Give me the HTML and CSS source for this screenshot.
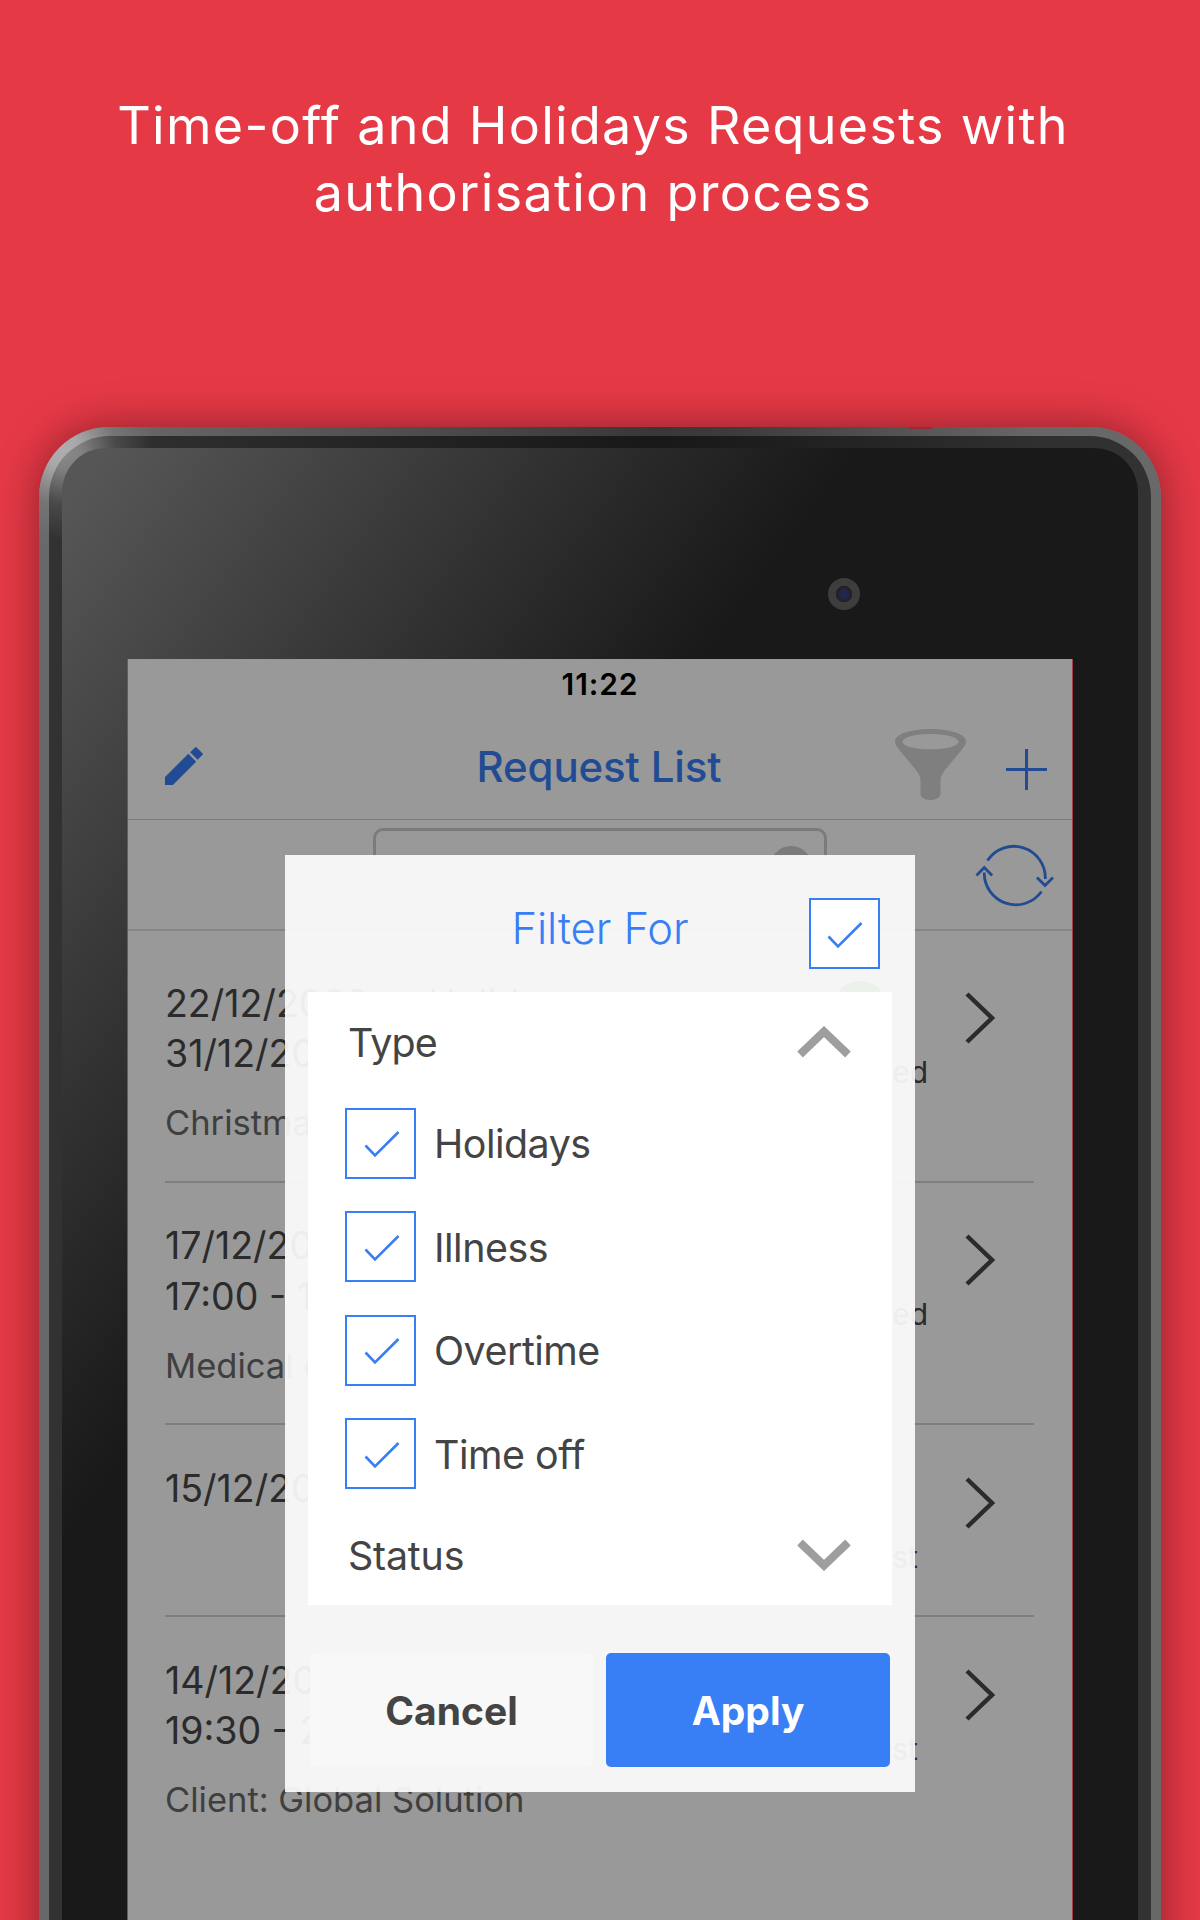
FILE: index.html
```html
<!DOCTYPE html>
<html lang="en">
<head>
<meta charset="utf-8">
<title>Request List</title>
<link rel="stylesheet" href="styles.css">
</head>
<body>
<main class="stage">
  <h1 class="headline">Time-off and Holidays Requests with<br>authorisation process</h1>
  <div class="tablet">
    <span class="sensor"></span>
    <div class="bezel">
      <div class="face">
        <span class="camera"></span>
        <div class="screen">
          <div class="status-bar">11:22</div>
          <header class="toolbar">
            <svg class="icon-edit" viewBox="64 64 384 384"><path d="M64 368v80h80l235.7-235.7-80-80L64 368zM444 143.500a10 10 0 0 0 0-15l-60-60a10 10 0 0 0-15 0l-51 49 76 76z"/></svg>
            <h2 class="title">Request List</h2>
            <div class="actions">
              <svg class="icon-funnel" viewBox="0 0 71 71"><path fill-rule="evenodd" d="M35.500 0C55 0 71 5 71 12.500c0 3-2 5.500-4 8L50 41c-3 4-4.500 7-4.500 10v14c0 3.500-4.500 6-10 6s-10-2.500-10-6V51c0-3-1.500-6-4.500-10L4 20.500c-2-2.500-4-5-4-8C0 5 16 0 35.500 0zM35.500 5C20 5 7.500 8.400 7.500 12.700S20 20.300 35.500 20.300 63.500 17 63.500 12.700 51 5 35.500 5z"/></svg>
              <svg class="icon-plus" viewBox="0 0 41 41"><path d="M20.500 0v41M0 20.500h41"/></svg>
            </div>
          </header>
          <div class="search-row">
            <div class="search"><span class="clear"></span></div>
            <svg class="icon-refresh" viewBox="0 0 80 80"><path d="M13.500 23.500A31.500 31.500 0 0 1 71.300 42M10.300 35.500A31.500 31.500 0 0 0 67.500 54.500M63 40.500l8 8 8-8M2.500 38.500l7.800-8 7.800 8"/></svg>
          </div>
          <div class="requests">
            <article class="request">
              <div class="dates">22/12/2020<br>31/12/2020</div>
              <div class="kind">Holidays</div>
              <div class="state"><span class="dot"></span>Accepted</div>
              <svg class="go" viewBox="0 0 30 52"><path d="M2 2l25 24L2 50"/></svg>
              <p class="note">Christmas</p>
            </article>
            <article class="request">
              <div class="dates">17/12/2020<br>17:00 - 18:00</div>
              <div class="state"><span class="dot"></span>Accepted</div>
              <svg class="go" viewBox="0 0 30 52"><path d="M2 2l25 24L2 50"/></svg>
              <p class="note">Medical c</p>
            </article>
            <article class="request">
              <div class="dates">15/12/2020</div>
              <div class="state"><span class="dot"></span>Request</div>
              <svg class="go" viewBox="0 0 30 52"><path d="M2 2l25 24L2 50"/></svg>
            </article>
            <article class="request">
              <div class="dates">14/12/2020<br>19:30 - 20:30</div>
              <div class="state"><span class="dot"></span>Request</div>
              <svg class="go" viewBox="0 0 30 52"><path d="M2 2l25 24L2 50"/></svg>
              <p class="note">Client: Global Solution</p>
            </article>
          </div>
          <div class="backdrop"></div>
          <section class="modal">
            <div class="modal-head">
              <h3 class="modal-title">Filter For</h3>
              <span class="check check-all"><svg viewBox="0 0 36 28"><path d="M1.500 15.500l9.500 10L34.500 2"/></svg></span>
            </div>
            <div class="panel">
              <div class="group"><span class="type-label">Type</span><svg viewBox="0 0 54 32"><path d="M3 28.500L27 5.500l24 23"/></svg></div>
              <div class="options">
                <div class="option"><span class="check"><svg viewBox="0 0 36 28"><path d="M1.500 15.500l9.500 10L34.500 2"/></svg></span><span>Holidays</span></div>
                <div class="option"><span class="check"><svg viewBox="0 0 36 28"><path d="M1.500 15.500l9.500 10L34.500 2"/></svg></span><span>Illness</span></div>
                <div class="option"><span class="check"><svg viewBox="0 0 36 28"><path d="M1.500 15.500l9.500 10L34.500 2"/></svg></span><span>Overtime</span></div>
                <div class="option"><span class="check"><svg viewBox="0 0 36 28"><path d="M1.500 15.500l9.500 10L34.500 2"/></svg></span><span>Time off</span></div>
              </div>
              <div class="group"><span>Status</span><svg viewBox="0 0 54 32"><path d="M3 3.500l24 23 24-23"/></svg></div>
            </div>
            <div class="buttons">
              <button class="button cancel">Cancel</button>
              <button class="button apply">Apply</button>
            </div>
          </section>
        </div>
      </div>
    </div>
  </div>
</main>
</body>
</html>
```
FILE: styles.css
```css
* { box-sizing: border-box; margin: 0; padding: 0; }
body { font-family: Inter, "Liberation Sans", sans-serif; }
svg { display: block; fill: none; flex: none; }

.stage {
  width: 1200px;
  height: 1920px;
  overflow: hidden;
  background: #e63946;
  padding-top: 92px;
}
.headline {
  width: 1186px;
  height: 335px;
  text-align: center;
  font-size: 52px;
  line-height: 67px;
  font-weight: 400;
  letter-spacing: 1.3px;
  color: #fff;
  white-space: nowrap;
}

/* Tablet body */
.tablet {
  position: relative;
  width: 1122px;
  height: 1600px;
  margin-left: 39px;
  padding: 9px 10px 0;
  border-radius: 70px 70px 0 0;
  background:
    radial-gradient(circle at 22px 22px, #aeaeae 0, #a8a8a8 18px, rgba(125,125,125,.6) 55px, rgba(105,105,105,0) 92px),
    linear-gradient(to right, #696969 0, #656565 10%, #383838 55%, #3c3c3c 62%, #666 88%, #696969);
  box-shadow: 0 0 44px rgba(0,0,0,.4);
}
.sensor {
  position: absolute;
  top: 0;
  left: 870px;
  width: 24px;
  height: 2px;
  border-radius: 0 0 12px 12px;
  background: #9a2b35;
}
.bezel {
  height: 100%;
  padding: 12px 13px 0;
  border-radius: 61px 61px 0 0;
  background:
    radial-gradient(circle at 18px 18px, #888 0, #808080 16px, rgba(90,90,90,.6) 50px, rgba(50,50,50,0) 86px),
    linear-gradient(to right, #323232 0, #2e2e2e 10%, #181818 55%, #1c1c1c 62%, #303030 90%, #323232);
}
.face {
  position: relative;
  height: 100%;
  padding: 211px 65px 0;
  border-radius: 44px 44px 0 0;
  background: linear-gradient(126deg, #565656 40px, #2d2d2d 440px, #191919 640px);
}
.camera {
  position: absolute;
  left: 766px;
  top: 130px;
  width: 32px;
  height: 32px;
  border-radius: 50%;
  background: radial-gradient(circle, #22254c 0 4px, #222 7px 8px, #3d3d3d 8.500px);
}

/* App screen */
.screen {
  position: relative;
  width: 946px;
  height: 1400px;
  border: solid #a3414b;
  border-width: 0 1px;
  background: #fff;
}
.status-bar {
  height: 50px;
  line-height: 51px;
  text-align: center;
  font-size: 30px;
  font-weight: 600;
  letter-spacing: .9px;
  color: #000;
}
.toolbar {
  display: grid;
  grid-template-columns: 1fr auto 1fr;
  align-items: center;
  height: 111px;
  padding: 4px 25px 0;
  border-bottom: 1px solid #d0d0d0;
}
.icon-edit { width: 38px; height: 38px; margin-left: 12px; fill: #387ef5; }
.title {
  padding: 2px 2px 0 0;
  font-size: 42px;
  line-height: 50px;
  font-weight: 500;
  letter-spacing: -.15px;
  color: #387ef5;
}
.actions { display: flex; justify-content: flex-end; align-items: center; gap: 40px; }
.icon-funnel { width: 71px; height: 71px; fill: #d4d4d4; margin: 0 0 3px 0; }
.icon-plus { width: 41px; height: 41px; stroke: #387ef5; stroke-width: 3; margin-top: 6px; }
.search-row {
  display: flex;
  justify-content: space-between;
  height: 111px;
  padding: 8px 18px 0 245px;
  border-bottom: 2px solid #e0e0e0;
}
.search {
  display: flex;
  justify-content: flex-end;
  width: 454px;
  height: 28px;
  padding: 15px 12px 0 0;
  overflow: hidden;
  border: 3px solid #cdcdcd;
  border-bottom: 0;
  border-radius: 10px 10px 0 0;
}
.clear { width: 42px; height: 42px; border-radius: 50%; background: #cdcdcd; }
.icon-refresh { width: 80px; height: 80px; margin-top: 9px; stroke: #387ef5; stroke-width: 2.8; }

/* Request list */
.requests { padding: 9px 38px 0 37px; }
.request {
  display: grid;
  grid-template-columns: 263px 1fr 140px 104px;
  align-content: start;
  min-height: 192px;
  padding: 38.500px 0 32.500px;
  border-bottom: 2px solid #d4d4d4;
  color: #484848;
}
.request:last-child { border-bottom: 0; }
.dates, .kind {
  grid-row: 1;
  font-size: 37.5px;
  line-height: 50.5px;
  white-space: nowrap;
}
.kind { grid-column: 2; }
.note {
  grid-column: 1 / 3;
  grid-row: 2;
  margin-top: 18.500px;
  font-size: 34.5px;
  line-height: 50px;
  color: #6a6a6a;
}
.state {
  grid-column: 3;
  grid-row: 1 / 3;
  display: flex;
  flex-direction: column;
  align-items: center;
  gap: 17px;
  height: 90px;
  padding-top: 2px;
  font-size: 30px;
  line-height: 36px;
}
.dot { width: 56px; height: 56px; flex: none; border-radius: 50%; background: #2fa83a; }
.go {
  grid-column: 4;
  grid-row: 1 / 3;
  width: 30px;
  height: 52px;
  margin: 13px 0 0 35px;
  stroke: #484848;
  stroke-width: 4.500;
}

/* Filter dialog */
.backdrop { position: absolute; inset: 0; background: rgba(0,0,0,.4); }
.modal {
  position: absolute;
  left: 157px;
  top: 196px;
  width: 630px;
  height: 937px;
  background: rgba(252,252,252,.93);
  color: #444;
}
.modal-head {
  display: grid;
  grid-template-columns: 1fr auto 1fr;
  height: 137px;
  padding: 43px 35.500px 0;
}
.modal-title {
  grid-column: 2;
  padding-top: 1.500px;
  font-size: 43.6px;
  line-height: 58px;
  font-weight: 300;
  letter-spacing: -.1px;
  color: #387ef5;
}
.check {
  display: flex;
  align-items: center;
  justify-content: center;
  width: 71px;
  height: 71px;
  border: 2.500px solid #387ef5;
  background: #fff;
}
.check svg { width: 36px; height: 28px; stroke: #387ef5; stroke-width: 2.600; margin: 2px 0 0 2px; }
.check-all { justify-self: end; }
.panel { margin: 0 23px; height: 613px; background: #fff; font-size: 39.4px; }
.group {
  display: flex;
  align-items: center;
  justify-content: space-between;
  height: 100px;
  padding: 0 41px 0 40px;
}
.group span { padding-top: 2px; letter-spacing: -.2px; }
.group .type-label { letter-spacing: -.8px; }
.group svg { width: 54px; height: 32px; stroke: #9e9e9e; stroke-width: 8; }
.options { display: grid; gap: 32.600px; padding: 15.500px 37px 15.500px; }
.option { display: flex; align-items: center; gap: 18px; height: 71px; letter-spacing: -.5px; }
.option > span:last-child { padding-top: 2px; }
.buttons { display: grid; grid-template-columns: 283px 284px; gap: 13px; padding: 48px 25px 0; }
.button {
  height: 114px;
  border: 0;
  border-radius: 5px;
  font: 700 39px Inter, "Liberation Sans", sans-serif;
}
.cancel { background: #f8f8f8; color: #444; }
.apply { background: #387ef5; color: #fff; }
```
